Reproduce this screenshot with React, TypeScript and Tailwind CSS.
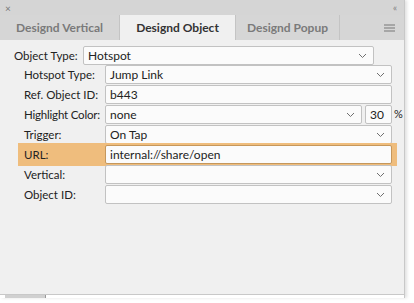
import React from 'react';

const font = { fontFamily: 'Lato, "Noto Sans", sans-serif' };

const Chevron = () => (
  <svg width="9" height="6" viewBox="0 0 9 6" className="shrink-0">
    <path d="M1 1 L4.5 4.5 L8 1" fill="none" stroke="#707070" strokeWidth="1" />
  </svg>
);

const Select = ({ value, className }: { value?: string; className?: string }) => (
  <div
    className={`flex h-[19px] items-center justify-between rounded-[2px] border border-[#c2c2c2] bg-[#fbfbfb] pl-[4px] pr-[6px] text-[12px] text-[#222] ${className ?? ''}`}
  >
    <span className="leading-none whitespace-nowrap">{value}</span>
    <Chevron />
  </div>
);

const Input = ({ value, className }: { value?: string; className?: string }) => (
  <div
    className={`flex h-[19px] items-center rounded-[2px] border border-[#c2c2c2] bg-[#fbfbfb] pl-[4px] text-[12px] text-[#222] ${className ?? ''}`}
  >
    <span className="leading-none whitespace-nowrap">{value}</span>
  </div>
);

const Row = ({ label, children, highlight }: { label: string; children: React.ReactNode; highlight?: boolean }) => (
  <div className={`flex items-center pl-[6px] pr-[5px] ${highlight ? 'my-[-2px] bg-[#efbd7d] py-[2px]' : ''}`}>
    <div className="w-[81px] shrink-0 whitespace-nowrap text-[11.5px] text-[#222]">{label}</div>
    <div className="flex flex-1 items-center">{children}</div>
  </div>
);

export default function App() {
  return (
    <div className="h-[303px] w-[414px] overflow-hidden bg-white" style={font}>
      <div className="w-[405px] border-r border-[#c8c8c8] shadow-[2px_0_3px_rgba(0,0,0,0.12)]">
        <div className="flex h-[15px] items-center justify-between bg-[#d5d5d5] px-[5px] text-[10px] leading-none text-[#777]">
          <span>×</span>
          <span className="mr-[3px] text-[9px] tracking-[-1px]">‹‹</span>
        </div>
        <div className="flex h-[25px] bg-[#d6d6d6] text-[12px] font-bold">
          <div className="flex w-[120px] items-center justify-center border-r border-[#c4c4c4] text-[#7a7a7a]">
            Designd Vertical
          </div>
          <div className="flex w-[115px] items-center justify-center bg-[#f0f0f0] text-[#333]">
            Designd Object
          </div>
          <div className="flex w-[105px] items-center justify-center border-x border-[#c4c4c4] text-[#7a7a7a]">
            Designd Popup
          </div>
          <div className="flex flex-1 items-center justify-end pr-[9px]">
            <svg width="11" height="8" viewBox="0 0 11 8">
              <path d="M0 1 H11 M0 4 H11 M0 7 H11" stroke="#777" strokeWidth="1" />
            </svg>
          </div>
        </div>
        <div className="h-[255px] border-b border-[#c8c8c8] bg-[#f0f0f0] pt-[6px]">
          <div className="flex items-center pl-[14px]">
            <div className="w-[69px] shrink-0 whitespace-nowrap text-[11.5px] text-[#222]">Object Type:</div>
            <Select value="Hotspot" className="w-[291px]" />
          </div>
          <div className="mr-[7px] flex flex-col gap-[1px] pl-[18px]">
            <Row label="Hotspot Type:">
              <Select value="Jump Link" className="flex-1" />
            </Row>
            <Row label="Ref. Object ID:">
              <Input value="b443" className="flex-1" />
            </Row>
            <div className="flex items-center pl-[6px]">
              <div className="w-[81px] shrink-0 whitespace-nowrap text-[11.5px] tracking-[-0.2px] text-[#222]">Highlight Color:</div>
              <div className="flex flex-1 items-center">
                <Select value="none" className="flex-1" />
                <Input value="30" className="ml-[3px] w-[27px]" />
                <span className="ml-[2px] w-[3px] text-[11px] text-[#222]">%</span>
              </div>
            </div>
            <Row label="Trigger:">
              <Select value="On Tap" className="flex-1" />
            </Row>
            <Row label="URL:" highlight>
              <Input value="internal://share/open" className="flex-1 border-[#c5975c] bg-[#f5c584]" />
            </Row>
            <Row label="Vertical:">
              <Select className="flex-1" />
            </Row>
            <Row label="Object ID:">
              <Select className="flex-1" />
            </Row>
          </div>
        </div>
        <div className="flex h-[3px]">
          <div className="ml-[5px] w-[40px] bg-[#d0d0d0]" />
          <div className="w-[1px] bg-[#999]" />
        </div>
      </div>
    </div>
  );
}
